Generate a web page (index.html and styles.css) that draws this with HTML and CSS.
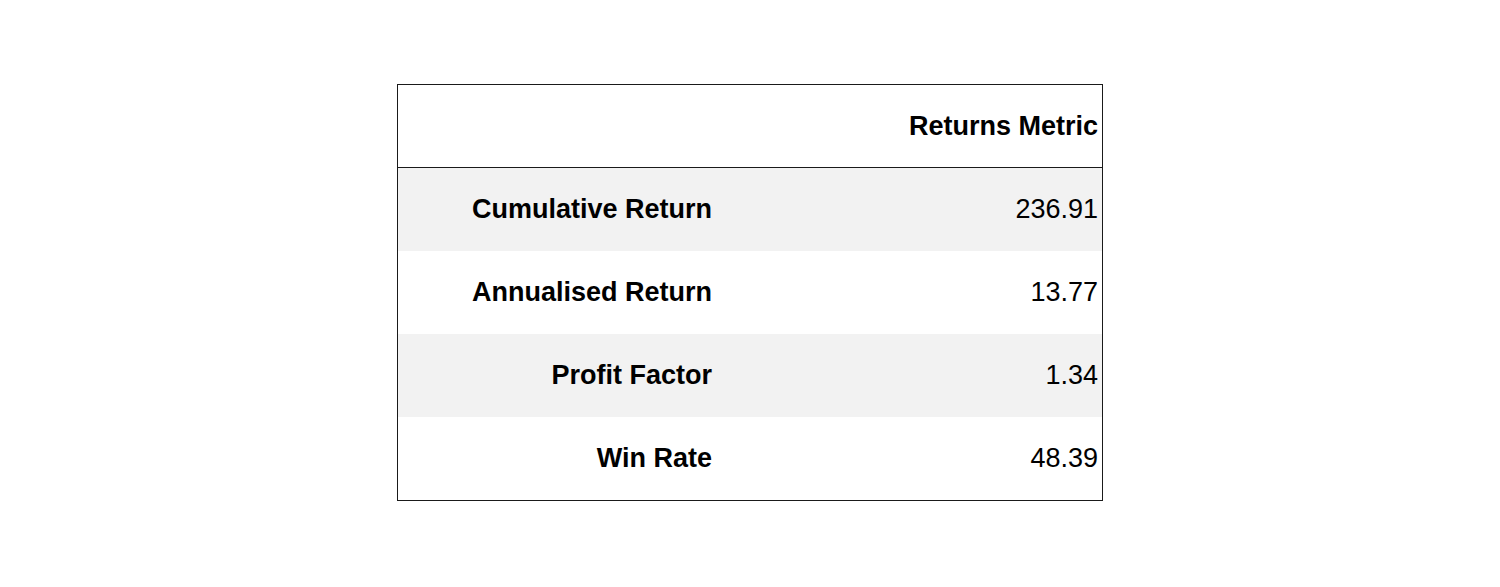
FILE: index.html
```html
<!DOCTYPE html>
<html>
<head>
<meta charset="utf-8">
<link rel="stylesheet" href="styles.css">
</head>
<body>
<div class="wrap">
<table class="metrics">
  <thead>
    <tr><th class="blank"></th><th class="col">Returns Metric</th></tr>
  </thead>
  <tbody>
    <tr class="odd"><th class="label">Cumulative Return</th><td class="val">236.91</td></tr>
    <tr><th class="label">Annualised Return</th><td class="val">13.77</td></tr>
    <tr class="odd"><th class="label">Profit Factor</th><td class="val">1.34</td></tr>
    <tr><th class="label">Win Rate</th><td class="val">48.39</td></tr>
  </tbody>
</table>
</div>
</body>
</html>
```
FILE: styles.css
```css
html, body {
  margin: 0;
  padding: 0;
  background: #fff;
}
.wrap {
  display: flex;
  justify-content: center;
  padding-top: 84px;
}
.metrics {
  border-collapse: collapse;
  border: 1px solid #1a1a1a;
  font-family: "Liberation Sans", Arial, sans-serif;
  font-size: 27px;
  color: #000;
  table-layout: fixed;
  width: 706px;
}
.metrics th, .metrics td {
  text-align: right;
  vertical-align: middle;
  padding: 0 4px 0 0;
  height: 83px;
}
.metrics thead th {
  height: 82px;
}
.metrics th {
  font-weight: bold;
}
.metrics thead tr {
  border-bottom: 1px solid #1a1a1a;
}
.metrics .blank, .metrics .label {
  width: 314px;
}
.metrics tr.odd {
  background: #f2f2f2;
}
.metrics td.val {
  font-weight: normal;
}
```
